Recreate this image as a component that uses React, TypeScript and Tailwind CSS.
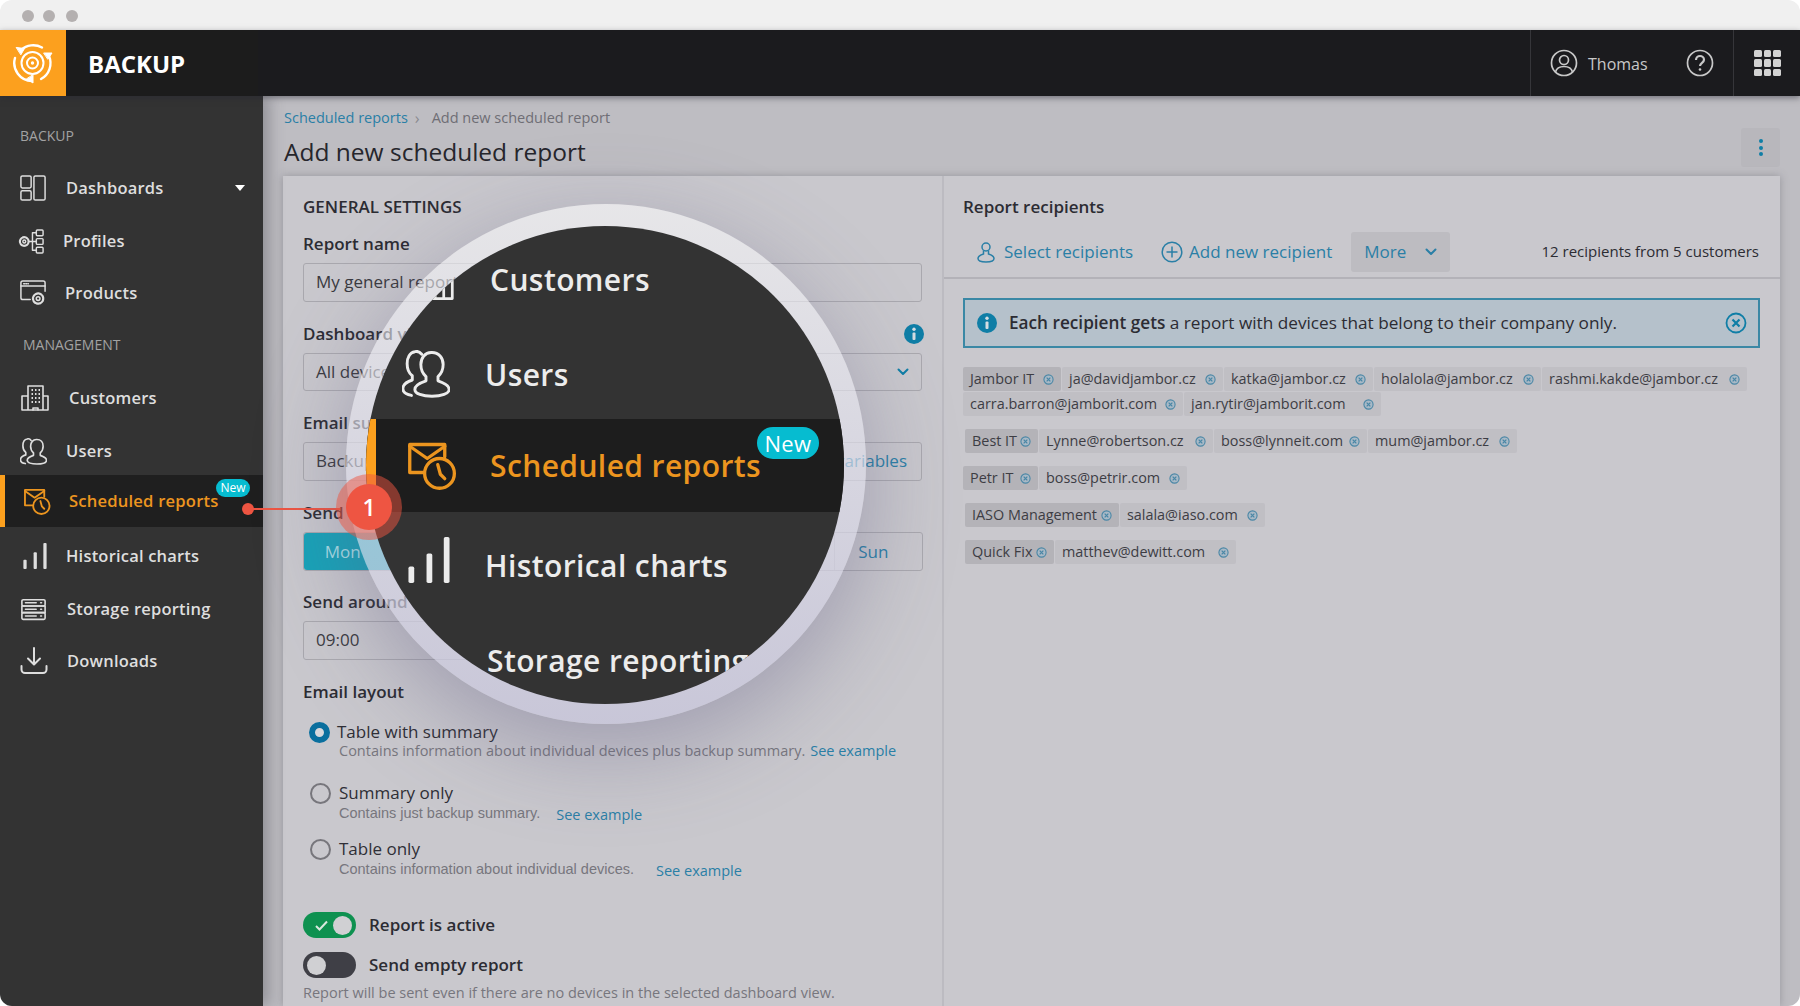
import React from "react";

type IP = { size?: number; className?: string };

const Svg = ({ size = 28, className = "", sw = 2, children }: IP & { sw?: number; children: React.ReactNode }) => (
  <svg width={size} height={size} viewBox="0 0 28 28" fill="none" stroke="currentColor" strokeWidth={sw} strokeLinecap="round" strokeLinejoin="round" className={className}>
    {children}
  </svg>
);

const DashIcon = (p: IP) => (
  <Svg {...p} sw={1.6}>
    <rect x="1" y="1" width="11" height="13" rx="1.5" />
    <rect x="1" y="17" width="11" height="10" rx="1.5" />
    <rect x="15" y="1" width="12" height="26" rx="1.5" />
  </Svg>
);
const ProfilesIcon = (p: IP) => (
  <Svg {...p} sw={1.5}>
    <circle cx="6.5" cy="14" r="4.5" strokeDasharray="2.2 1" strokeWidth="2.2" />
    <circle cx="6.5" cy="14" r="1.5" />
    <path d="M11 14h8M15 5v18M15 5h4M15 23h4" />
    <rect x="19" y="2" width="7" height="6" rx="1" />
    <rect x="19" y="11" width="7" height="6" rx="1" />
    <rect x="19" y="20" width="7" height="6" rx="1" />
  </Svg>
);
const ProductsIcon = (p: IP) => (
  <Svg {...p} sw={1.6}>
    <path d="M11 21H3a2 2 0 0 1-2-2V3a2 2 0 0 1 2-2h22a2 2 0 0 1 2 2v9" />
    <path d="M1 6.5h26" />
    <path d="M4 4h5" strokeDasharray="1 1.4" />
    <circle cx="19.5" cy="20" r="5.5" strokeDasharray="2.6 1.2" strokeWidth="2.4" />
    <circle cx="19.5" cy="20" r="2" />
  </Svg>
);
const CustomersIcon = (p: IP) => (
  <Svg {...p} sw={1.6}>
    <path d="M7 26V2h15v24M1 26V12h6M22 12h5v14M1 26h26" />
    <path d="M10.5 6h1.5M14 6h1.5M17.5 6H19M10.5 10h1.5M14 10h1.5M17.5 10H19M10.5 14h1.5M14 14h1.5M17.5 14H19M10.5 18h1.5M14 18h1.5M17.5 18H19" strokeWidth="2" strokeLinecap="butt" />
    <path d="M12 26v-2h5v2" />
  </Svg>
);
const UsersIcon = (p: IP) => (
  <Svg {...p} sw={1.7}>
    <path d="M17.5 1.5c4 0 6.500 3 6.500 7 0 3-1.300 5.500-3 7v2.500c3 1 6.500 2.500 6.500 5 0 2.500-4.500 4-10 4s-10-1.500-10-4c0-2.500 3.500-4 6.500-5v-2.500c-1.700-1.500-3-4-3-7 0-4 2.500-7 6-7z" />
    <path d="M11.500 2.500c-1-1.200-2.500-2-4-1.500C4.500 1.500 3 4.500 3 8c0 3 1 5.500 3 7v2.500c-3 1-5.500 2.500-5.500 5s2 3.500 5 4" />
  </Svg>
);
const ScheduledIcon = (p: IP) => (
  <Svg {...p} sw={1.9}>
    <path d="M9 18H1V2h20v7" />
    <path d="M1 3l10 7 10-7" />
    <circle cx="18" cy="18.500" r="8.500" />
    <path d="M17 13.500l1.500 5.500 2.500 2.500" />
  </Svg>
);
const ChartsIcon = ({ size = 28, className = "" }: IP) => (
  <svg width={size} height={size} viewBox="0 0 28 28" fill="currentColor" className={className}>
    <rect x="1.500" y="18" width="3.500" height="10" rx="1" />
    <rect x="12.500" y="10" width="3.500" height="18" rx="1" />
    <rect x="23" y="0" width="3.500" height="28" rx="1" />
  </svg>
);
const StorageIcon = (p: IP) => (
  <Svg {...p} sw={1.8}>
    <rect x="1" y="3" width="26" height="7" rx="1.500" />
    <rect x="1" y="10" width="26" height="7.500" />
    <rect x="1" y="17.500" width="26" height="7.500" rx="1.500" />
    <path d="M5 6.500h12M5 13.700h12M5 21.200h12M22 6.500h1M22 13.700h1M22 21.200h1" />
  </Svg>
);
const DownloadIcon = (p: IP) => (
  <Svg {...p} sw={2}>
    <path d="M14 1v16M8 11.500l6 6 6-6" />
    <path d="M1.500 19v3.500a3.500 3.500 0 0 0 3.500 3.500h18a3.500 3.500 0 0 0 3.500-3.500V19" />
  </Svg>
);
const Logo = () => (
  <svg width="42" height="42" viewBox="0 0 42 42" fill="none" stroke="#fff" strokeWidth="2.400" strokeLinecap="round">
    <path d="M9 8a18 18 0 0 1 21-2.500" />
    <path d="M37 14a18 18 0 0 1-8 23" />
    <path d="M20 39A18 18 0 0 1 3 16" />
    <path d="M4.500 5.500l8 1-3.500 6z" fill="#fff" strokeWidth="1" />
    <path d="M32 11h8l-4 6z" fill="#fff" strokeWidth="1" />
    <path d="M21 33v8l-6-4z" fill="#fff" strokeWidth="1" />
    <circle cx="20.500" cy="21" r="11" strokeWidth="2" />
    <circle cx="20.500" cy="21" r="5.500" strokeWidth="2" />
    <circle cx="20.500" cy="21" r="1.700" fill="#fff" strokeWidth="0" />
  </svg>
);
const TagX = () => (
  <svg width="11" height="11" viewBox="0 0 12 12" fill="none" stroke="#4a87a6" strokeWidth="1.200" className="shrink-0">
    <circle cx="6" cy="6" r="5" fill="#a9b9c6" />
    <path d="M4 4l4 4M8 4l-4 4" strokeWidth="1.400" />
  </svg>
);
const Chevron = ({ className = "" }: { className?: string }) => (
  <svg width="12" height="8" viewBox="0 0 12 8" fill="none" stroke="currentColor" strokeWidth="2" strokeLinecap="round" strokeLinejoin="round" className={className}>
    <path d="M1.500 1.500L6 6l4.500-4.500" />
  </svg>
);
const InfoDot = ({ size = 20 }: { size?: number }) => (
  <svg width={size} height={size} viewBox="0 0 20 20" className="shrink-0">
    <circle cx="10" cy="10" r="10" fill="#0f7ea6" />
    <circle cx="10" cy="5.300" r="1.700" fill="#d4dde2" />
    <rect x="8.500" y="8.500" width="3" height="7.500" rx="1" fill="#d4dde2" />
  </svg>
);

const F = "font-['Open_Sans',sans-serif]";

type Nav = { label: string; Icon: (p: IP) => React.ReactElement; size: number; icon: string; text: string; cls: string; caret?: boolean };
const topNav: Nav[] = [
  { label: "Dashboards", Icon: DashIcon, size: 26, icon: "ml-[20px]", text: "ml-[20px]", cls: "mt-[16px]", caret: true },
  { label: "Profiles", Icon: ProfilesIcon, size: 27, icon: "ml-[18px]", text: "ml-[18px]", cls: "mt-px" },
  { label: "Products", Icon: ProductsIcon, size: 26, icon: "ml-[20px]", text: "ml-[19px]", cls: "" },
];
const lowerNav: Nav[] = [
  { label: "Customers", Icon: CustomersIcon, size: 28, icon: "ml-[21px]", text: "ml-[20px]", cls: "mt-[2px]" },
  { label: "Users", Icon: UsersIcon, size: 27, icon: "ml-[20px]", text: "ml-[19px]", cls: "mt-px" },
];
const afterNav: Nav[] = [
  { label: "Historical charts", Icon: ChartsIcon, size: 26, icon: "ml-[22px]", text: "ml-[18px]", cls: "mt-[3px]" },
  { label: "Storage reporting", Icon: StorageIcon, size: 25, icon: "ml-[21px]", text: "ml-[21px]", cls: "mt-px" },
  { label: "Downloads", Icon: DownloadIcon, size: 28, icon: "ml-[20px]", text: "ml-[19px]", cls: "" },
];

const NavRow = ({ n }: { n: Nav }) => (
  <div className={`h-[52px] flex items-center text-[#dedede] ${n.cls}`}>
    <div className={`${n.icon} shrink-0 flex`}>
      <n.Icon size={n.size} />
    </div>
    <span className={`${n.text} text-[16.500px] font-semibold tracking-[0.2px]`}>{n.label}</span>
    {n.caret && <span className="ml-auto mr-[18px] w-0 h-0 border-l-[5px] border-r-[5px] border-t-[6px] border-l-transparent border-r-transparent border-t-white" />}
  </div>
);

const Sidebar = () => (
  <aside className="w-[263px] shrink-0 bg-[#333333] pt-[28px] shadow-[6px_0_14px_rgba(60,60,70,0.35)] relative z-10">
    <div className="h-[22px] flex items-center pl-[20px] text-[14px] text-[#a2a2a2]">BACKUP</div>
    {topNav.map((n) => <NavRow key={n.label} n={n} />)}
    <div className="h-[52px] -mt-px flex items-center pl-[23px] text-[14px] text-[#a2a2a2]">MANAGEMENT</div>
    {lowerNav.map((n) => <NavRow key={n.label} n={n} />)}
    <div className="h-[52px] -mt-[2px] bg-[#1f1f1f] border-l-[5px] border-[#fca01e] flex items-center relative text-[#ec951f]">
      <div className="ml-[19px] flex"><ScheduledIcon size={27} /></div>
      <span className="ml-[18px] text-[16.600px] font-semibold tracking-[0.2px]">Scheduled reports</span>
      <span className="absolute left-[211px] top-[4px] w-[34px] h-[18px] rounded-full bg-[#06bcd0] text-white text-[12px] flex items-center justify-center">New</span>
    </div>
    {afterNav.map((n) => <NavRow key={n.label} n={n} />)}
  </aside>
);

const Header = () => (
  <header className="h-[66px] bg-[#1b1b1e] flex items-stretch shadow-[0_2px_6px_rgba(40,40,50,0.5)] relative z-20">
    <div className="w-[66px] bg-[#fca01e] flex items-center justify-center"><Logo /></div>
    <div className="w-[192px] bg-[#1c1c1c] flex items-center pl-[22px] pt-[2px] text-white text-[24px] font-bold">BACKUP</div>
    <div className="ml-auto w-[203px] border-l border-[#36363a] flex items-center text-[#c8c8c8]">
      <svg width="28" height="28" viewBox="0 0 28 28" fill="none" stroke="currentColor" strokeWidth="1.700" className="ml-[19px] shrink-0">
        <circle cx="14" cy="14" r="12.500" />
        <circle cx="14" cy="11" r="4.500" />
        <path d="M5.500 23c1-4 4.500-5.500 8.500-5.500s7.500 1.500 8.500 5.500" />
      </svg>
      <span className="ml-[10px] pt-[2px] text-[16px] font-medium">Thomas</span>
      <svg width="28" height="28" viewBox="0 0 28 28" fill="none" stroke="currentColor" strokeWidth="1.700" className="ml-auto mr-[19px] shrink-0">
        <circle cx="14" cy="14" r="12.500" />
        <path d="M10 11c0-2.500 2-4 4-4s4 1.500 4 3.800c0 3-4 3.200-4 6.200" strokeWidth="2.200" />
        <circle cx="14" cy="20.500" r="1.300" fill="currentColor" stroke="none" />
      </svg>
    </div>
    <div className="w-[67px] border-l border-[#36363a] flex items-center pl-[20px]">
      <div className="grid grid-cols-3 gap-[2px] w-[27px]">
        {Array.from({ length: 9 }).map((_, i) => <span key={i} className="h-[7.500px] w-[7.500px] rounded-[1.500px] bg-[#d2d2d2]" />)}
      </div>
    </div>
  </header>
);

const Label = ({ cls = "", children }: { cls?: string; children: React.ReactNode }) => (
  <div className={`h-[22px] flex items-center text-[17px] font-semibold text-[#2c2c33] whitespace-nowrap ${cls}`}>{children}</div>
);
const Field = ({ h = "h-[39px]", cls = "w-full", children }: { h?: string; cls?: string; children: React.ReactNode }) => (
  <div className={`${h} ${cls} mt-[8px] border border-[#a9a8ae] rounded-[3px] flex items-center pl-[12px] pr-[12px] pb-px text-[17px] text-[#3a3a40] whitespace-nowrap`}>{children}</div>
);

const Radio = ({ on, title, sub, ex, cls, subFont, rowCls, subGap, subCls = "" }: { on?: boolean; title: string; sub: string; ex: string; cls: string; subFont: string; rowCls: string; subGap: string; subCls?: string }) => (
  <div className={cls}>
    <div className={`h-[22px] flex items-center text-[17px] text-[#2f2f36] ${rowCls}`}>
      {on ? (
        <span className="w-[21px] h-[21px] rounded-full border-[6px] border-[#0a6f9e] bg-[#d8d8dc] shrink-0" />
      ) : (
        <span className="w-[21px] h-[21px] rounded-full border-[2px] border-[#77767c] shrink-0" />
      )}
      <span className={on ? "ml-[7px]" : "ml-[8px]"}>{title}</span>
    </div>
    <div className={`flex items-center h-[20px] ml-[36px] text-[#77767d] ${subFont} ${subCls}`}>
      <span>{sub}</span>
      <span className={`${subGap} text-[#2a7fa6] text-[14.500px] font-['Open_Sans',sans-serif]`}>{ex}</span>
    </div>
  </div>
);

const LeftPanel = () => (
  <section className="w-[661px] shrink-0 pl-[20px] pr-[20px] border-r-2 border-[#bcbbc1] overflow-hidden">
    <Label cls="mt-[20px]">GENERAL SETTINGS</Label>
    <Label cls="mt-[15px]">Report name</Label>
    <Field>My general report</Field>
    <Label cls="mt-[21px] justify-between"><span>Dashboard view</span><span className="-mr-[2px] flex"><InfoDot /></span></Label>
    <Field h="h-[38px]"><span>All devices</span><Chevron className="ml-auto text-[#0f7ea6]" /></Field>
    <Label cls="mt-[21px]">Email subject</Label>
    <Field><span>Backup report</span><span className="ml-auto text-[#2a7fa6] pr-[2px]">Use variables</span></Field>
    <Label cls="mt-[21px]">Send on</Label>
    <div className="mt-[8px] h-[39px] w-[620px] flex border border-[#a9a8ae] rounded-[3px] text-[17px] text-[#2a7fa6]">
      {["Mon", "Tue", "Wed", "Thu", "Fri", "Sat", "Sun"].map((d, i) => (
        <div key={d} className={`flex-1 flex items-center justify-center pr-[10px] ${i === 0 ? "bg-[#17a3b8] text-[#a9dfe6] rounded-l-[3px]" : "border-l border-[#b4b3b9]"}`}>{d}</div>
      ))}
    </div>
    <Label cls="mt-[20px]">Send around</Label>
    <Field cls="w-[200px]">09:00</Field>
    <Label cls="mt-[21px]">Email layout</Label>
    <Radio on title="Table with summary" sub="Contains information about individual devices plus backup summary." ex="See example" cls="mt-[18px]" rowCls="pl-[6px]" subCls="-mt-[2px]" subFont="text-[14.500px] font-['Open_Sans',sans-serif]" subGap="ml-[5px]" />
    <Radio title="Summary only" sub="Contains just backup summary." ex="See example" cls="mt-[21px]" rowCls="pl-[7px]" subFont="text-[14.500px] font-['Liberation_Sans',sans-serif]" subGap="ml-[16px] translate-y-[1px]" />
    <Radio title="Table only" sub="Contains information about individual devices." ex="See example" cls="mt-[14px]" rowCls="pl-[7px]" subFont="text-[14.500px] font-['Liberation_Sans',sans-serif]" subGap="ml-[22px] translate-y-[1px]" />
    <div className="mt-[32px] h-[26px] flex items-center">
      <span className="w-[53px] h-[26px] rounded-full bg-[#0e9150] flex items-center justify-between pl-[12px] pr-[4px]">
        <svg width="13" height="11" viewBox="0 0 13 11" fill="none" stroke="#d8e8de" strokeWidth="2"><path d="M1 6l3.500 3.500L12 1.500" /></svg>
        <span className="w-[19px] h-[19px] rounded-full bg-[#d0d0d3]" />
      </span>
      <span className="ml-[13px] text-[17px] font-semibold text-[#2c2c33]">Report is active</span>
    </div>
    <div className="mt-[14px] h-[26px] flex items-center">
      <span className="w-[53px] h-[26px] rounded-full bg-[#3f3f46] flex items-center pl-[4px]">
        <span className="w-[19px] h-[19px] rounded-full bg-[#d0d0d3]" />
      </span>
      <span className="ml-[13px] text-[17px] font-semibold text-[#2c2c33]">Send empty report</span>
    </div>
    <div className="mt-[4px] h-[22px] flex items-center text-[14.500px] text-[#77767d]">Report will be sent even if there are no devices in the selected dashboard view.</div>
  </section>
);

const Tag = ({ t, head, w }: { t: string; head?: boolean; w: string }) => (
  <span className={`h-[24px] ${w} rounded-[2px] flex items-center justify-between pl-[7px] pr-[7px] text-[14.400px] whitespace-nowrap text-[#3d3d44] ${head ? "bg-[#b4b3b8]" : "bg-[#c0bfc4]"}`}>
    <span>{t}</span><TagX />
  </span>
);

const RightPanel = () => (
  <section className="flex-1 min-w-0">
    <div className="h-[22px] mt-[20px] ml-[19px] flex items-center text-[17px] font-semibold text-[#2c2c33]">Report recipients</div>
    <div className="mt-[14px] h-[40px] flex items-center text-[17px] text-[#2a7fa6] pl-[32px] pr-[21px] whitespace-nowrap">
      <svg width="20" height="22" viewBox="0 0 20 22" fill="none" stroke="currentColor" strokeWidth="1.500">
        <circle cx="10" cy="6" r="4" />
        <path d="M7.500 9.500v3.500C4 14 2 15 2 17.500 2 20 5 21 10 21s8-1 8-3.500c0-2.500-2-3.500-5.500-4.500V9.500" />
      </svg>
      <span className="ml-[8px]">Select recipients</span>
      <svg width="22" height="22" viewBox="0 0 22 22" fill="none" stroke="currentColor" strokeWidth="1.500" className="ml-[28px]">
        <circle cx="11" cy="11" r="9.800" />
        <path d="M11 5.500v11M5.500 11h11" />
      </svg>
      <span className="ml-[6px]">Add new recipient</span>
      <div className="ml-[19px] w-[99px] h-[40px] rounded-[3px] bg-[#bdbcc1] flex items-center pl-[13px]">
        <span>More</span><Chevron className="ml-[19px]" />
      </div>
      <span className="ml-auto pb-px text-[15px] font-medium text-[#2c2c33]">12 recipients from 5 customers</span>
    </div>
    <div className="h-[2px] mt-[5px] bg-[#b3b2b8]" />
    <div className="ml-[19px] mr-[20px] mt-[19px] h-[50px] border-2 border-[#3a88a5] bg-[#b5c1cb] flex items-center pl-[12px] pr-[11px] text-[17.200px] text-[#2c2c33] whitespace-nowrap">
      <InfoDot />
      <span className="ml-[12px]"><b className="font-semibold">Each recipient gets</b> a report with devices that belong to their company only.</span>
      <svg width="22" height="22" viewBox="0 0 22 22" fill="none" stroke="#0f7ea6" strokeWidth="1.800" className="ml-auto">
        <circle cx="11" cy="11" r="9.500" />
        <path d="M7.500 7.500l7 7M14.500 7.500l-7 7" strokeWidth="2.200" />
      </svg>
    </div>
    <div className="ml-[19px] mt-[19px] flex flex-wrap gap-[1px] w-[790px]">
      <Tag head t="Jambor IT" w="w-[98px]" />
      <Tag t="ja@davidjambor.cz" w="w-[161px]" />
      <Tag t="katka@jambor.cz" w="w-[149px]" />
      <Tag t="holalola@jambor.cz" w="w-[167px]" />
      <Tag t="rashmi.kakde@jambor.cz" w="w-[205px]" />
      <Tag t="carra.barron@jamborit.com" w="w-[220px]" />
      <Tag t="jan.rytir@jamborit.com" w="w-[197px]" />
    </div>
    <div className="ml-[21px] mt-[13px] flex gap-[1px]">
      <Tag head t="Best IT" w="w-[73px]" />
      <Tag t="Lynne@robertson.cz" w="w-[174px]" />
      <Tag t="boss@lynneit.com" w="w-[153px]" />
      <Tag t="mum@jambor.cz" w="w-[149px]" />
    </div>
    <div className="ml-[19px] mt-[13px] flex gap-[1px]">
      <Tag head t="Petr IT" w="w-[75px]" />
      <Tag t="boss@petrir.com" w="w-[148px]" />
    </div>
    <div className="ml-[21px] mt-[13px] flex gap-[1px]">
      <Tag head t="IASO Management" w="w-[154px]" />
      <Tag t="salala@iaso.com" w="w-[145px]" />
    </div>
    <div className="ml-[21px] mt-[13px] flex gap-[1px]">
      <Tag head t="Quick Fix" w="w-[89px]" />
      <Tag t="matthev@dewitt.com" w="w-[181px]" />
    </div>
  </section>
);

const Main = () => (
  <main className="flex-1 min-w-0 bg-[#bebdc2] pl-[20px] pr-[20px] flex flex-col overflow-hidden">
    <div className="h-[22px] mt-[11px] pl-px flex items-center text-[14.500px]">
      <span className="text-[#2a7fa6]">Scheduled reports</span>
      <span className="ml-[7px] text-[#8b8a90] text-[16px] leading-none">›</span>
      <span className="ml-[12px] text-[#6f6e75]">Add new scheduled report</span>
    </div>
    <div className="h-[40px] flex items-start justify-between">
      <h1 className="pl-px pt-[3px] text-[24.500px] leading-[40px] font-medium text-[#26262c]">Add new scheduled report</h1>
      <div className="w-[39px] h-[39px] -mt-px rounded-[3px] bg-[#b8b7bc] flex flex-col items-center justify-center gap-[2.500px]">
        <span className="w-[4px] h-[4px] rounded-full bg-[#0f7ea6]" />
        <span className="w-[4px] h-[4px] rounded-full bg-[#0f7ea6]" />
        <span className="w-[4px] h-[4px] rounded-full bg-[#0f7ea6]" />
      </div>
    </div>
    <div className="flex-1 mt-[7px] bg-[#c9c8cd] flex shadow-[0_0_8px_rgba(90,90,100,0.4)] min-h-0">
      <LeftPanel />
      <RightPanel />
    </div>
  </main>
);

const Lens = () => (
  <div className="absolute left-[346px] top-[204px] w-[520px] h-[520px] rounded-full bg-gradient-to-b from-white/55 to-[#c8c6dc]/75 shadow-[0_26px_90px_rgba(95,90,130,0.4)] z-30">
    <div className="absolute left-[20px] top-[22px] w-[478px] h-[478px] rounded-full bg-[#333333] overflow-hidden text-[#ececec] text-[30px] font-semibold tracking-[0.4px]">
      <div className="h-[108px] pb-[2px] relative flex items-center pl-[124px]">
        <div className="absolute left-[40px] top-[28px] flex"><CustomersIcon size={48} /></div>
        <span>Customers</span>
      </div>
      <div className="h-[80px] mb-[5px] flex items-center pl-[36px]">
        <UsersIcon size={48} />
        <span className="ml-[35px]">Users</span>
      </div>
      <div className="h-[93px] relative bg-[#1d1d1d] border-l-[10px] border-[#fca01e] flex items-center pl-[32px] text-[#ec951f]">
        <ScheduledIcon size={49} />
        <span className="ml-[33px]">Scheduled reports</span>
        <span className="absolute left-[381px] top-[8px] w-[62px] h-[32px] rounded-full bg-[#06bcd0] text-white text-[22px] font-medium flex items-center justify-center">New</span>
      </div>
      <div className="h-[106px] flex items-center pl-[40px]">
        <ChartsIcon size={46} className="-translate-y-[5px]" />
        <span className="ml-[33px]">Historical charts</span>
      </div>
      <div className="h-[84px] flex items-center pl-[121px]">
        <span className="whitespace-nowrap">Storage reporting</span>
      </div>
    </div>
    <div className="absolute -left-[10px] top-[270px] w-[66px] h-[66px] rounded-full bg-[#ee5542]/50 flex items-center justify-center">
      <div className="w-[46px] h-[46px] rounded-full bg-[#ee5542] text-white text-[23px] font-semibold flex items-center justify-center">1</div>
    </div>
  </div>
);

export default function App() {
  return (
    <div className={`w-[1800px] h-[1006px] relative overflow-hidden rounded-[12px] bg-white flex flex-col ${F}`}>
      <div className="h-[30px] shrink-0 bg-[#f0f0f0] flex items-center pl-[22px] pt-[2px]">
        <span className="w-[12px] h-[12px] rounded-full bg-[#b4b0b0]" />
        <span className="ml-[9px] w-[12px] h-[12px] rounded-full bg-[#b4b0b0]" />
        <span className="ml-[11px] w-[12px] h-[12px] rounded-full bg-[#b4b0b0]" />
      </div>
      <Header />
      <div className="flex-1 flex min-h-0">
        <Sidebar />
        <Main />
      </div>
      <span className="absolute left-[242px] top-[503px] w-[12px] h-[12px] rounded-full bg-[#ee5542] z-30" />
      <span className="absolute left-[250px] top-[508px] w-[90px] h-[2px] bg-[#ee5542] z-30" />
      <Lens />
    </div>
  );
}
